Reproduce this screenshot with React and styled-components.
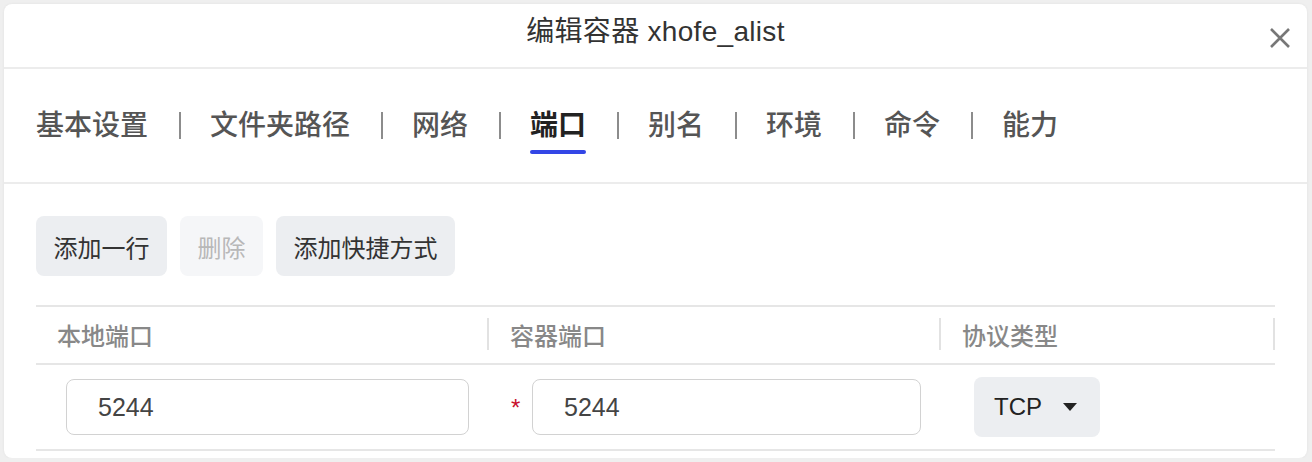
import React from "react";
import styled, { createGlobalStyle } from "styled-components";

const FONT = `"Liberation Sans", "Noto Sans CJK SC", sans-serif`;

const GlobalStyle = createGlobalStyle`
  html, body {
    margin: 0;
    padding: 0;
    background: #efefef;
  }
  body {
    font-family: ${FONT};
  }
`;

const tabs = ["基本设置", "文件夹路径", "网络", "端口", "别名", "环境", "命令", "能力"];
const activeTab = 3;

const columns = [
  { key: "host", title: "本地端口" },
  { key: "container", title: "容器端口" },
  { key: "protocol", title: "协议类型" }
];

const rows = [{ host: "5244", container: "5244", protocol: "TCP" }];

export default function App() {
  return (
    <>
      <GlobalStyle />
      <Dialog>
        <Header>
          <span />
          <Title>编辑容器 xhofe_alist</Title>
          <CloseButton aria-label="close">
            <svg width="20" height="20" viewBox="0 0 20 20">
              <path
                d="M1 1 L19 19 M19 1 L1 19"
                stroke="#777"
                strokeWidth="2.6"
                fill="none"
              />
            </svg>
          </CloseButton>
        </Header>

        <TabBar>
          {tabs.map((t, i) => (
            <React.Fragment key={t}>
              {i > 0 && <TabDivider />}
              <Tab>
                <TabLabel active={i === activeTab}>{t}</TabLabel>
                <TabUnderline active={i === activeTab} />
              </Tab>
            </React.Fragment>
          ))}
        </TabBar>

        <Content>
          <Toolbar>
            <ActionButton>添加一行</ActionButton>
            <ActionButton disabled>删除</ActionButton>
            <ActionButton>添加快捷方式</ActionButton>
          </Toolbar>

          <Table>
            <HeadRow>
              {columns.map(c => (
                <HeadCell key={c.key}>
                  {c.title}
                  <HeadDivider />
                </HeadCell>
              ))}
            </HeadRow>
            {rows.map((r, i) => (
              <BodyRow key={i}>
                <HostCell>
                  <PortInput defaultValue={r.host} />
                </HostCell>
                <ContainerCell>
                  <Required>*</Required>
                  <PortInput defaultValue={r.container} />
                </ContainerCell>
                <ProtocolCell>
                  <Select>
                    {r.protocol}
                    <svg width="14" height="8" viewBox="0 0 14 8">
                      <polygon points="0,0 14,0 7,8" fill="#222" />
                    </svg>
                  </Select>
                </ProtocolCell>
              </BodyRow>
            ))}
          </Table>
        </Content>
      </Dialog>
    </>
  );
}

let Dialog = styled.div`
  box-sizing: border-box;
  margin: 4px 0 0 4px;
  width: 1303px;
  height: 454px;
  background: #fff;
  border-radius: 8px;
  overflow: hidden;
  box-shadow: 0 0 3px rgba(0, 0, 0, 0.06);
  font-family: ${FONT};
`;

let Header = styled.header`
  display: grid;
  grid-template-columns: 1fr auto 1fr;
  align-items: center;
  height: 63px;
  padding: 0 17px;
  border-bottom: 2px solid #ececec;
`;

let Title = styled.h1`
  margin: 0 0 8px;
  font-size: 28px;
  font-weight: 400;
  line-height: 40px;
  letter-spacing: 0.3px;
  color: #333;
`;

let CloseButton = styled.button`
  justify-self: end;
  display: flex;
  margin-top: 4px;
  padding: 0;
  border: 0;
  background: none;
  cursor: pointer;
`;

let TabBar = styled.nav`
  display: flex;
  align-items: center;
  height: 113px;
  padding-left: 32px;
  border-bottom: 2px solid #ececec;
`;

let Tab = styled.div`
  display: flex;
  flex-direction: column;
  align-items: stretch;
  padding-top: 8px;
  cursor: pointer;
`;

let TabLabel = styled.span`
  font-size: 28px;
  line-height: 40px;
  font-weight: ${({ active }) => (active ? 600 : 500)};
  color: ${({ active }) => (active ? "#222" : "#555")};
  white-space: nowrap;
`;

let TabUnderline = styled.span`
  height: 4px;
  margin-top: 4px;
  border-radius: 2px;
  background: ${({ active }) => (active ? "#3346e6" : "transparent")};
`;

let TabDivider = styled.span`
  width: 2px;
  height: 27px;
  margin: 0 29px 0 31px;
  background: #8c8c8c;
`;

let Content = styled.section`
  padding: 32px 32px 0;
`;

let Toolbar = styled.div`
  display: flex;
  gap: 13px;
  margin-bottom: 29px;
`;

let ActionButton = styled.button`
  height: 60px;
  padding: 0 17.5px;
  border: 0;
  border-radius: 8px;
  font-family: ${FONT};
  font-size: 24px;
  color: ${({ disabled }) => (disabled ? "#b8b8b8" : "#333")};
  background: ${({ disabled }) => (disabled ? "#f5f6f8" : "#eceef1")};
  cursor: ${({ disabled }) => (disabled ? "default" : "pointer")};
`;

let Table = styled.div`
  border-top: 2px solid #e6e6e6;
`;

let HeadRow = styled.div`
  display: grid;
  grid-template-columns: 453px 452px 1fr;
  height: 56px;
  border-bottom: 2px solid #e6e6e6;
`;

let HeadCell = styled.div`
  display: flex;
  align-items: center;
  justify-content: space-between;
  padding-left: 21px;
  padding-bottom: 2px;
  font-size: 24px;
  font-weight: 500;
  color: #888;
`;

let HeadDivider = styled.span`
  width: 2px;
  height: 32px;
  background: #e2e2e2;
`;

let BodyRow = styled.div`
  display: grid;
  grid-template-columns: 453px 452px 1fr;
  height: 84px;
  border-bottom: 2px solid #e6e6e6;
`;

let HostCell = styled.div`
  display: flex;
  align-items: center;
  padding: 0 20px 0 30px;
`;

let ContainerCell = styled.div`
  display: flex;
  align-items: center;
  gap: 12px;
  padding: 0 20px 0 22px;
`;

let ProtocolCell = styled.div`
  display: flex;
  align-items: center;
  padding-left: 33px;
`;

let Required = styled.span`
  width: 9px;
  font-size: 24px;
  line-height: 1;
  color: #c8102e;
  padding-top: 2px;
`;

let PortInput = styled.input`
  box-sizing: border-box;
  flex: 1;
  min-width: 0;
  height: 56px;
  padding: 0 0 0 31px;
  border: 1px solid #d2d2d2;
  border-radius: 8px;
  outline: none;
  font-family: ${FONT};
  font-size: 25px;
  color: #444;
  background: #fff;
`;

let Select = styled.div`
  display: flex;
  align-items: center;
  gap: 21px;
  height: 60px;
  padding: 0 23px 0 20px;
  border-radius: 8px;
  background: #eceef1;
  font-size: 24px;
  color: #222;
  cursor: pointer;
`;
